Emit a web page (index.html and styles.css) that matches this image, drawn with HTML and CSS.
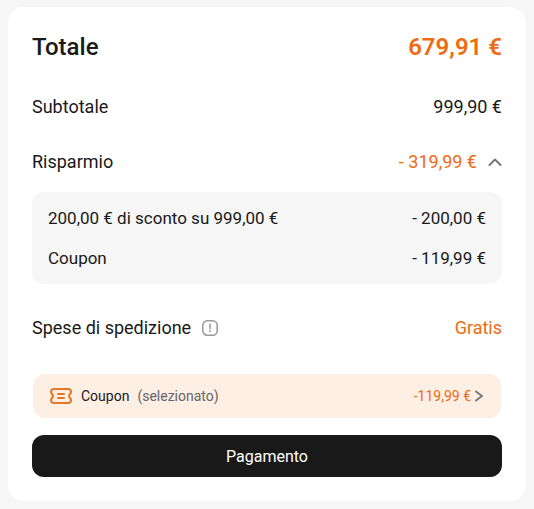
FILE: index.html
```html
<!DOCTYPE html>
<html lang="it">
<head>
  <meta charset="UTF-8">
  <meta name="viewport" content="width=device-width, initial-scale=1">
  <title>Carrello</title>
  <link rel="stylesheet" href="styles.css">
</head>
<body>

<main class="summary">
  <div class="row total">
    <span>Totale</span>
    <span class="total-price">679,91 €</span>
  </div>

  <div class="row">
    <span>Subtotale</span>
    <span>999,90 €</span>
  </div>

  <div class="row">
    <span>Risparmio</span>
    <button type="button" class="toggle" aria-expanded="true" aria-controls="savings">
      - 319,99 €
      <svg class="chevron-up" viewBox="0 0 14 8"><path d="M1.500 7L7 1.500 12.500 7"/></svg>
    </button>
  </div>

  <div class="savings" id="savings">
    <div class="savings-row">
      <span>200,00 € di sconto su 999,00 €</span>
      <span>- 200,00 €</span>
    </div>
    <div class="savings-row">
      <span>Coupon</span>
      <span>- 119,99 €</span>
    </div>
  </div>

  <div class="row shipping">
    <span class="shipping-label">
      Spese di spedizione
      <button type="button" class="info" aria-label="Informazioni sulla spedizione">
        <svg viewBox="0 0 16 16">
          <rect x=".8" y=".8" width="14.400" height="14.400" rx="4.500"/>
          <path d="M8 4v4.800M8 10.800v.800"/>
        </svg>
      </button>
    </span>
    <span class="free">Gratis</span>
  </div>

  <button type="button" class="coupon">
    <svg class="coupon-icon" viewBox="0 0 22 16">
      <path d="M4 1h14a3 3 0 0 1 3 3c0 1.800-2 2.200-2 4s2 2.200 2 4a3 3 0 0 1-3 3H4a3 3 0 0 1-3-3c0-1.800 2-2.200 2-4S1 5.800 1 4a3 3 0 0 1 3-3z"/>
      <path d="M8 6h6M8 10h6"/>
    </svg>
    <span>Coupon</span>
    <span class="coupon-state">(selezionato)</span>
    <span class="coupon-price">-119,99 €</span>
    <svg class="chevron-right" viewBox="0 0 8 12"><path d="M1 1.500L7 6l-6 4.500"/></svg>
  </button>

  <button type="submit" class="pay">Pagamento</button>
</main>

</body>
</html>
```
FILE: styles.css
```css
* {
  box-sizing: border-box;
}

body {
  margin: 0;
  padding: 7px 8px 8px;
  background: #f6f6f6;
  color: #191919;
  font-family: Roboto, "Liberation Sans", sans-serif;
  font-size: 18px;
  line-height: 24px;
}

button {
  padding: 0;
  border: none;
  background: none;
  color: inherit;
  font: inherit;
  cursor: pointer;
}

svg {
  display: block;
  fill: none;
  stroke: currentColor;
  stroke-linecap: round;
  stroke-linejoin: round;
}

.summary {
  display: flex;
  flex-direction: column;
  padding: 24px;
  border-radius: 16px;
  background: #fff;
}

.row {
  display: flex;
  justify-content: space-between;
  align-items: center;
  margin-bottom: 31px;
}

.total {
  margin-bottom: 32px;
  font-size: 24px;
  font-weight: 500;
  line-height: 32px;
}

.total-price {
  color: #ee6c10;
  font-weight: 600;
}

.toggle {
  display: flex;
  align-items: center;
  gap: 11px;
  color: #ee6c10;
}

.chevron-up {
  width: 14px;
  height: 8px;
  color: #777;
  stroke-width: 2;
}

.savings {
  display: flex;
  flex-direction: column;
  gap: 16px;
  margin: -13px 0 32px;
  padding: 14px 16px;
  border-radius: 12px;
  background: #f6f6f6;
  font-size: 17px;
}

.savings-row {
  display: flex;
  justify-content: space-between;
}

.shipping {
  margin-bottom: 34px;
}

.shipping-label {
  display: flex;
  align-items: center;
  gap: 11px;
}

.info {
  width: 16px;
  height: 16px;
  color: #999;
}

.info svg {
  stroke-width: 1.5;
}

.free {
  color: #ee6c10;
}

.coupon {
  display: flex;
  align-items: center;
  margin: 0 1px 17px;
  padding: 10px 18px 10px 17px;
  border-radius: 12px;
  background: #fdefe4;
  font-size: 14px;
}

.coupon-icon {
  width: 22px;
  height: 16px;
  margin-right: 9px;
  color: #e87722;
  stroke-width: 2;
}

.coupon-state {
  margin-left: 8px;
  color: #666;
}

.coupon-price {
  margin-left: auto;
  color: #ee6c10;
}

.chevron-right {
  width: 8px;
  height: 12px;
  margin-left: 4px;
  color: #777;
  stroke-width: 2;
}

.pay {
  padding: 10px 9px 8px;
  border-radius: 12px;
  background: #191919;
  color: #fff;
  font-size: 16px;
}
```
